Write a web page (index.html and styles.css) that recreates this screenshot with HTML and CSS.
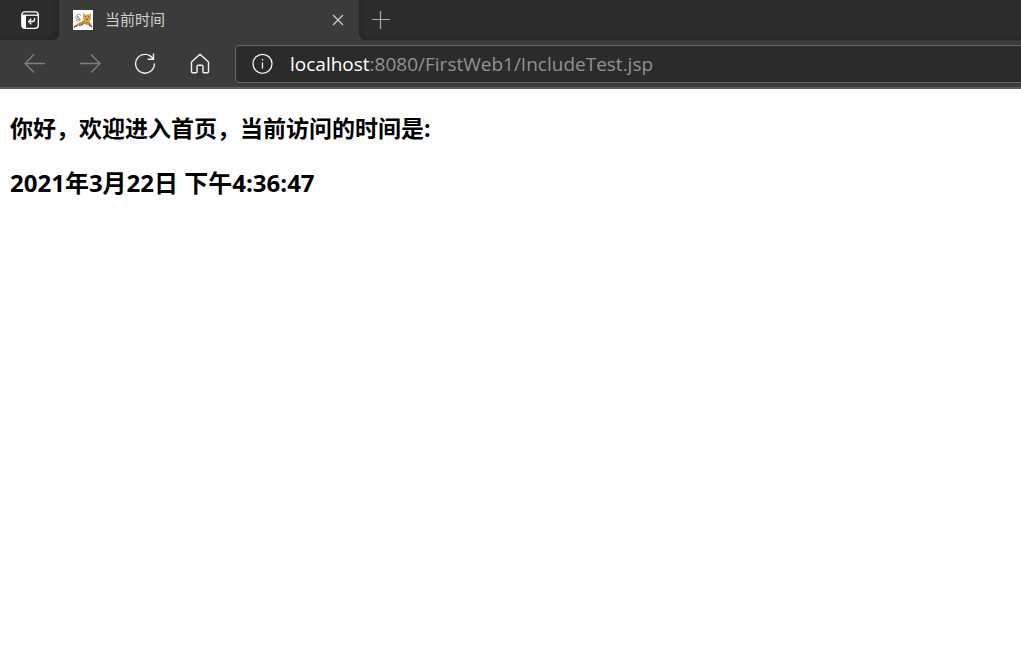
FILE: index.html
```html
<!DOCTYPE html>
<html lang="zh-CN">
<head>
<meta charset="utf-8">
<title>当前时间</title>
<link rel="stylesheet" href="styles.css">
</head>
<body>
<header>
<div class="tabs">
<button class="actions" aria-label="Tab actions">
<svg width="20" height="20" viewBox="0 0 20 20" fill="none" stroke="#fff" stroke-width="1.3">
<rect x="1.8" y="1.8" width="16.5" height="16.5" rx="3"/>
<path d="M2 5.2h16"/>
<path d="M2 5h4v13H4q-2 0-2-2z" fill="#fff" stroke="none"/>
<path d="M14.5 8v1.5q0 2-2 2H9M11.3 8.8 8.6 11.5l2.7 2.7"/>
</svg>
</button>
<div class="tab">
<svg class="favicon" width="20" height="20" viewBox="0 0 20 20">
<path d="M0 0h20v20H0z" fill="#fff"/>
<path d="M5 10Q1 8 4 5q3-2 4 1M3 10q3 3 5-1" fill="none" stroke="#999"/>
<path d="M0 17q3-3 8-5l3-2 5 1 2 3 2 3-5-2-4-1-5 1-3 2z" fill="#c08a35"/>
<path d="M10 3l2 1.500h4L18 3v6l-2 3h-4l-2-3z" fill="#d9a544"/>
<path d="M12 6.500h1M15 6.500h1M13 9.500h2" stroke="#70552a"/>
<path d="M4 7h2M5 9h2M6 15.500l4-1M1 17.500l3-2M16 15l3 2" stroke="#444"/>
</svg>
<span class="title">当前时间</span>
<button class="close" aria-label="Close tab">
<svg width="12" height="12" viewBox="0 0 12 12" fill="none" stroke="#d0d0d0" stroke-width="1.2"><path d="M1 1l10 10M11 1 1 11"/></svg>
</button>
</div>
<button class="newtab" aria-label="New tab">
<svg width="18" height="18" viewBox="0 0 18 18" fill="none" stroke="#aaa" stroke-width="1.2"><path d="M8.500 0v18M0 8.500h18"/></svg>
</button>
</div>
<div class="toolbar">
<button class="nav" aria-label="Back" disabled>
<svg width="22" height="22" viewBox="0 0 22 22" fill="none" stroke="#808080" stroke-width="1.3"><path d="M21 10.500H1.500M10 1.500l-9 9 9 9"/></svg>
</button>
<button class="nav" aria-label="Forward" disabled>
<svg width="22" height="22" viewBox="0 0 22 22" fill="none" stroke="#808080" stroke-width="1.3"><path d="M1 10.500h19.500M12 1.500l9 9-9 9"/></svg>
</button>
<button class="nav" aria-label="Refresh">
<svg width="22" height="22" viewBox="0 0 22 22" fill="none" stroke="#f2f2f2" stroke-width="1.4"><path d="M19 5.800A9.400 9.400 0 1 0 20.400 10.500M19.500.5v5.800h-5.800"/></svg>
</button>
<button class="nav" aria-label="Home">
<svg width="22" height="22" viewBox="0 0 22 22" fill="none" stroke="#f2f2f2" stroke-width="1.4" stroke-linejoin="round"><path d="M2.5 9 11 1.300l8.500 7.700v9.500q0 1.300-1.300 1.300h-3.200q-1 0-1-1v-5.300q0-1.200-1.200-1.200H9.200Q8 12.300 8 13.500v5.300q0 1-1 1H3.800q-1.300 0-1.300-1.300z"/></svg>
</button>
<div class="address">
<svg width="22" height="22" viewBox="0 0 22 22" fill="none" stroke="#f2f2f2" stroke-width="1.3"><circle cx="11.500" cy="10.800" r="9.500"/><path d="M11.500 9.500V15.500M11.500 6v1.600"/></svg>
<a class="url" href="#"><b>localhost</b>:8080/FirstWeb1/IncludeTest.jsp</a>
</div>
</div>
</header>
<main>
<h2>你好，欢迎进入首页，当前访问的时间是:</h2>
<h2 class="time">2021年3月22日 下午4:36:47</h2>
</main>
</body>
</html>
```

FILE: styles.css
```css
body {
  margin: 0;
  background-color: #ffffff;
  font-family: "Open Sans", "Noto Sans CJK SC", sans-serif;
}

header {
  background-color: #3b3b3b;
  border-bottom: 2px solid #5e5e5e;
  overflow: hidden;
}

button {
  display: flex;
  align-items: center;
  justify-content: center;
  padding: 0;
  border: 0;
  background: none;
}

svg {
  display: block;
  flex: none;
}

.tabs {
  display: flex;
  height: 40px;
}

.actions {
  width: 59px;
  background-color: #2d2d2d;
  border-bottom-right-radius: 6px;
  box-shadow: inset -4px -3px 4px #272727;
}

.tab {
  display: flex;
  align-items: center;
  width: 300px;
  padding: 0 14px;
  box-sizing: border-box;
}

.title {
  flex: 1;
  margin-left: 12px;
  font-family: "Noto Sans CJK SC", sans-serif;
  font-size: 15px;
  font-weight: 400;
  line-height: 20px;
  padding-bottom: 2px;
  color: #d0d0d0;
}

.close {
  width: 14px;
  height: 20px;
}

.newtab {
  flex: 1;
  justify-content: flex-start;
  padding-left: 13px;
  background-color: #2d2d2d;
  border-bottom-left-radius: 6px;
  box-shadow: inset 3px -3px 4px #272727;
}

.toolbar {
  display: flex;
  align-items: center;
  height: 47px;
  padding-left: 7px;
}

.nav {
  width: 55px;
  height: 40px;
}

.address {
  display: flex;
  flex: 1;
  align-items: center;
  height: 36px;
  margin-left: 8px;
  margin-right: -8px;
  padding-left: 15px;
  border: 1px solid #686868;
  border-radius: 4px;
  background-color: #2b2b2b;
}

.url {
  margin-left: 17px;
  font-size: 19px;
  line-height: 26px;
  color: #929292;
  text-decoration: none;
}

.url b {
  font-weight: 400;
  color: #ffffff;
}

main {
  padding: 22px 10px;
}

h2 {
  margin: 0 0 21px;
  font-size: 23px;
  line-height: 34px;
  color: #000000;
}

.time {
  font-size: 24px;
}
```
